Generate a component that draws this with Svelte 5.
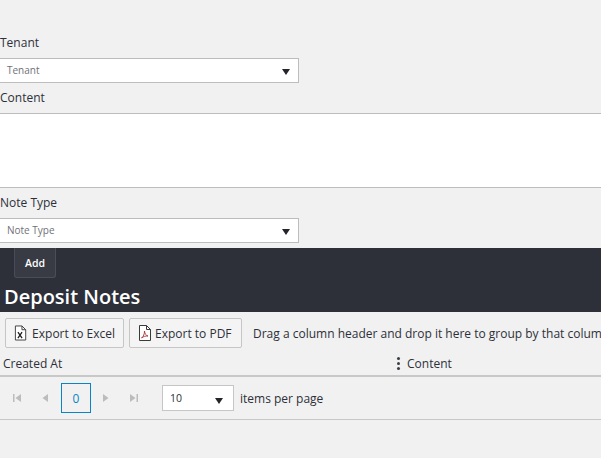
<script>
  const pagerLeft = ['first', 'prev'];
  const pagerRight = ['next', 'last'];
</script>

<div class="page">
  <div class="field first">
    <label for="tenant">Tenant</label>
    <div class="select" id="tenant"><span>Tenant</span><i class="caret"></i></div>
  </div>
  <div class="field">
    <label for="content">Content</label>
    <div class="textarea" id="content"></div>
  </div>
  <div class="field note">
    <label for="note">Note Type</label>
    <div class="select" id="note"><span>Note Type</span><i class="caret"></i></div>
  </div>

  <section class="band">
    <button class="add">Add</button>
    <h2>Deposit Notes</h2>
  </section>

  <div class="toolbar">
    <button class="tool">
      <svg width="14" height="16" viewBox="0 0 14 16"><path d="M1.5.5h7l4 4v11h-11z" fill="#fff" stroke="#3a3a3a"/><path d="M8.5.5v4h4" fill="none" stroke="#3a3a3a"/><path d="M4.2 7l4.4 6.5M8.600 7l-4.400 6.500" stroke="#222" stroke-width="1.4"/></svg>
      Export to Excel
    </button>
    <button class="tool">
      <svg width="14" height="16" viewBox="0 0 14 16"><path d="M1.5.5h7l4 4v11h-11z" fill="#fff" stroke="#3a3a3a"/><path d="M8.5.5v4h4" fill="none" stroke="#3a3a3a"/><path d="M3.5 13c2-1.500 3-4 3-7 .3 3 1.500 4.500 3.500 5-2.500-.2-4.500.5-6.500 2z" fill="none" stroke="#a33" stroke-width=".9"/></svg>
      Export to PDF
    </button>
    <span class="hint">Drag a column header and drop it here to group by that column</span>
  </div>

  <div class="header">
    <div class="col created">Created At</div>
    <div class="col content"><i class="dots"></i>Content</div>
  </div>

  <div class="pager">
    <div class="nav">
      {#each pagerLeft as p}
        <svg class="arrow" width="10" height="10" viewBox="0 0 10 10">
          {#if p === 'first'}<path d="M1 1h1.500v8H1zM9 1v8L3.500 5z" />{:else}<path d="M8 1v8L2.500 5z" />{/if}
        </svg>
      {/each}
    </div>
    <div class="num">0</div>
    <div class="nav right">
      {#each pagerRight as p}
        <svg class="arrow" width="10" height="10" viewBox="0 0 10 10">
          {#if p === 'last'}<path d="M1 1v8l5.500-4zM7.500 1H9v8H7.500z" />{:else}<path d="M2 1v8l5.500-4z" />{/if}
        </svg>
      {/each}
    </div>
    <div class="size"><span>10</span><i class="caret"></i></div>
    <span class="per">items per page</span>
  </div>
</div>

<style>
  :global(body) {
    margin: 0;
    background: #f1f1f1;
  }
  .page {
    width: 601px;
    height: 458px;
    overflow: hidden;
    font-family: "Open Sans", "Noto Sans", sans-serif;
    font-size: 12px;
    color: #2d3039;
    background: #f1f1f1;
  }
  .field { display: flex; flex-direction: column; }
  .field.first { padding-top: 35px; }
  .field.note { padding-top: 7px; }
  label {
    height: 16px;
    line-height: 16px;
    margin-bottom: 7px;
  }
  .select {
    box-sizing: border-box;
    width: 300px;
    height: 25px;
    margin-bottom: 7px;
    margin-left: -1px;
    display: flex;
    align-items: center;
    justify-content: space-between;
    padding: 0 8px 2px 7px;
    background: #fff;
    border: 1px solid #bdbdbd;
    font-size: 10px;
    color: #6f7177;
  }
  .field.note .select { margin-bottom: 5px; }
  .caret {
    width: 0;
    height: 0;
    border-left: 4px solid transparent;
    border-right: 4px solid transparent;
    border-top: 6px solid #23252b;
    margin-top: 5px;
  }
  .textarea {
    box-sizing: border-box;
    height: 75px;
    width: 601px;
    background: #fff;
    border-top: 1px solid #bdbdbd;
    border-bottom: 1px solid #bdbdbd;
  }
  .band {
    height: 64px;
    background: #2d3039;
    color: #fff;
    box-sizing: border-box;
  }
  .add {
    display: block;
    margin-left: 14px;
    width: 42px;
    height: 30px;
    box-sizing: border-box;
    background: #383b44;
    border: 1px solid #4a4d57;
    border-top: 0;
    border-radius: 0 0 3px 3px;
    color: #fff;
    font: 600 10.500px "Open Sans", sans-serif;
    padding: 0;
  }
  h2 {
    margin: 5px 0 0 4px;
    font-size: 20px;
    font-weight: 600;
    line-height: 27px;
  }
  .toolbar {
    display: flex;
    align-items: center;
    gap: 5px;
    padding: 6px 0 0 5px;
    height: 30px;
    white-space: nowrap;
  }
  .tool {
    flex-shrink: 0;
    height: 30px;
    box-sizing: border-box;
    display: flex;
    align-items: center;
    gap: 5px;
    padding: 0 8px;
    background: #f4f4f4;
    border: 1px solid #c6c6c6;
    border-radius: 2px;
    color: #2d3039;
    font: 12px "Open Sans", sans-serif;
  }
  .tool:first-child { width: 119px; }
  .tool:nth-child(2) { width: 113px; gap: 3px; padding-right: 6px; }
  .hint { margin-left: 6px; }
  .header {
    display: flex;
    align-items: center;
    height: 28px;
    margin-top: 1px;
    box-sizing: border-box;
    padding-top: 2px;
    border-bottom: 2px solid #c8c8c8;
  }
  .created { width: 393px; padding-left: 3px; box-sizing: border-box; }
  .content { display: flex; align-items: center; gap: 7px; }
  .dots {
    width: 3px;
    height: 3px;
    border-radius: 50%;
    background: #3b3e46;
    box-shadow: 0 -5px 0 #3b3e46, 0 5px 0 #3b3e46;
    margin-left: 4px;
  }
  .pager {
    height: 43px;
    box-sizing: border-box;
    display: flex;
    align-items: center;
    border-bottom: 1px solid #c8c8c8;
    padding-left: 12px;
  }
  .nav { display: flex; gap: 18px; width: 49px; }
  .nav.right { margin-left: 10px; width: 50px; gap: 18px; }
  .arrow { fill: #bcbcbc; }
  .num {
    box-sizing: border-box;
    width: 30px;
    height: 30px;
    border: 1px solid #0a84c4;
    color: #0a84c4;
    display: flex;
    align-items: center;
    justify-content: center;
    font-size: 12px;
  }
  .size {
    box-sizing: border-box;
    width: 72px;
    height: 26px;
    margin-left: 11px;
    background: #fff;
    border: 1px solid #c6c6c6;
    display: flex;
    align-items: center;
    justify-content: space-between;
    padding: 0 10px 0 7px;
    font-size: 10.500px;
  }
  .per { margin-left: 6px; }
</style>
